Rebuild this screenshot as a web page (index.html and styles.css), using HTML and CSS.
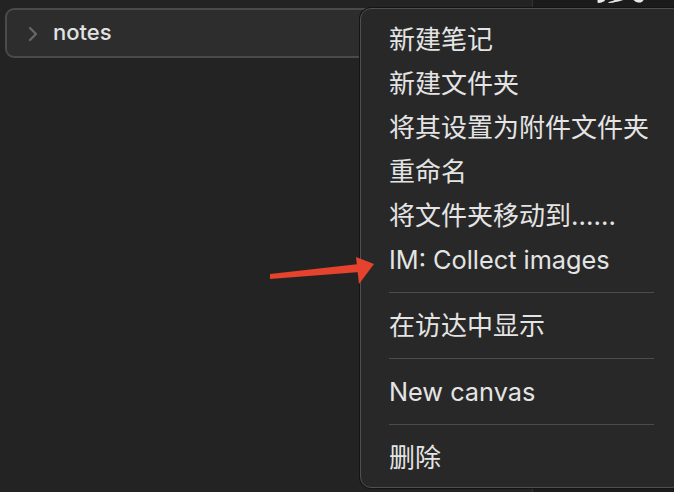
FILE: index.html
```html
<!DOCTYPE html>
<html lang="zh">
<head>
<meta charset="utf-8">
<link rel="stylesheet" href="styles.css">
</head>
<body>
<div class="app">
  <aside class="sidebar">
    <div class="folder-row">
      <svg class="chev" width="12" height="16" viewBox="0 0 12 16"><path d="M3 2 L9 8 L3 14" fill="none" stroke="#686868" stroke-width="2.2" stroke-linecap="round" stroke-linejoin="round"/></svg>
      <span class="folder-name">notes</span>
    </div>
  </aside>
  <main class="pane">
    <h1 class="heading">接</h1>
  </main>
</div>

<div class="menu">
  <div class="item">新建笔记</div>
  <div class="item">新建文件夹</div>
  <div class="item">将其设置为附件文件夹</div>
  <div class="item">重命名</div>
  <div class="item">将文件夹移动到……</div>
  <div class="item latin">IM: Collect images</div>
  <div class="sep"></div>
  <div class="item">在访达中显示</div>
  <div class="sep"></div>
  <div class="item latin">New canvas</div>
  <div class="sep"></div>
  <div class="item">删除</div>
</div>

<svg class="arrow" width="115" height="36" viewBox="0 0 115 36">
  <polygon points="4,22 4,27 94,20 93,12" fill="#e5432d"/>
  <polygon points="90,5 108,12 93,32" fill="#e5432d"/>
</svg>
</body>
</html>
```
FILE: styles.css
```css
html, body {
  margin: 0;
  padding: 0;
  background: #232323;
  overflow: hidden;
  height: 100%;
}
body {
  font-family: Inter, "Noto Sans CJK SC", sans-serif;
}
.app {
  display: flex;
  height: 492px;
}
.sidebar {
  width: 533px;
  flex: none;
  padding: 8px 5px 0 5px;
  box-sizing: border-box;
  border-right: 1px solid #343434;
  background: #232323;
}
.folder-row {
  height: 50px;
  box-sizing: border-box;
  border: 2px solid #4a4a4a;
  border-radius: 9px;
  background: #2d2d2d;
  display: flex;
  align-items: center;
  padding-left: 20px;
}
.chev {
  flex: none;
  margin-top: 1px;
}
.folder-name {
  margin-left: 14px;
  color: #e2e2e2;
  font-size: 22px;
  font-weight: 500;
  line-height: 1;
  margin-top: -2px;
}
.pane {
  flex: 1;
  background: #1b1b1b;
  overflow: hidden;
}
.heading {
  margin: -55px 0 0 59px;
  font-family: "Noto Serif CJK SC", "Noto Sans CJK SC", serif;
  font-size: 56px;
  font-weight: 900;
  color: #e8e8e8;
  line-height: 1;
  white-space: nowrap;
}
.menu {
  position: absolute;
  left: 360px;
  top: 8px;
  width: 323px;
  box-sizing: border-box;
  background: #282828;
  border: 1px solid #505050;
  box-shadow: 0 0 0 1px #141414;
  border-radius: 11px;
  padding: 9px 28px 7px 28px;
}
.item {
  height: 44px;
  line-height: 44px;
  font-size: 26px;
  color: #e4e4e4;
  white-space: nowrap;
}
.item.latin {
  font-size: 25.3px;
}
.sep {
  height: 1px;
  background: #4c4c4c;
  margin: 10px 0 11px 0;
}
.arrow {
  position: absolute;
  left: 266px;
  top: 252px;
}
```
